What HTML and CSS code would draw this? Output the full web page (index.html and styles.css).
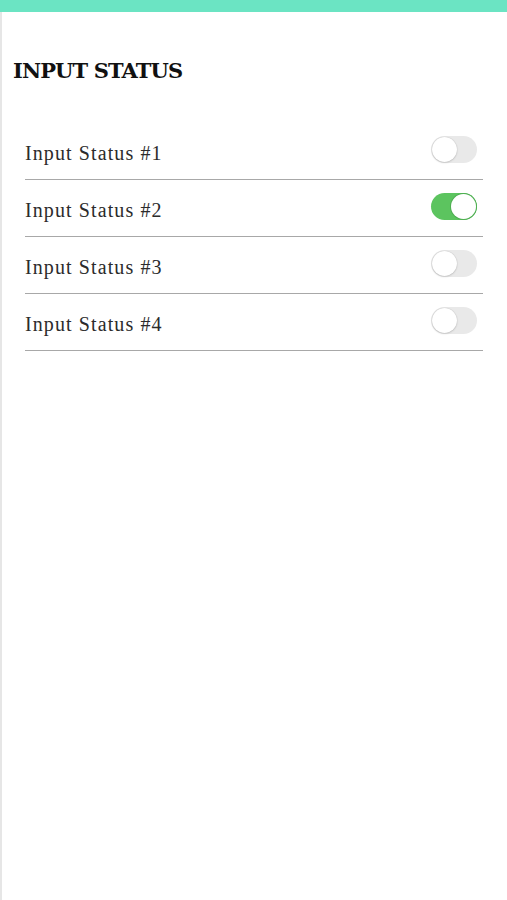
FILE: index.html
```html
<!DOCTYPE html>
<html lang="en">
<head>
    <meta charset="UTF-8">
    <meta name="viewport" content="width=device-width, initial-scale=1.0">
    <title>Input Status</title>
    <link rel="stylesheet" href="styles.css">
</head>
<body>

    <header class="top-bar"></header>

    <main class="panel">
        <h1>INPUT STATUS</h1>

        <ul class="status-list">
            <li class="status-row">
                <span>Input Status #1</span>
                <label class="switch"><input type="checkbox"><span class="slider"></span></label>
            </li>
            <li class="status-row">
                <span>Input Status #2</span>
                <label class="switch"><input type="checkbox" checked><span class="slider"></span></label>
            </li>
            <li class="status-row">
                <span>Input Status #3</span>
                <label class="switch"><input type="checkbox"><span class="slider"></span></label>
            </li>
            <li class="status-row">
                <span>Input Status #4</span>
                <label class="switch"><input type="checkbox"><span class="slider"></span></label>
            </li>
        </ul>
    </main>

</body>
</html>
```

FILE: styles.css
```css
html, body {
    height: 100%;
}

body {
    margin: 0;
    padding: 0;
    background: #fff;
    font-family: "Liberation Serif", serif;
    color: #2b2b2b;
    display: flex;
    flex-direction: column;
}

.top-bar {
    height: 12px;
    background: #6be4c3;
}

.panel {
    flex: 1;
    border-left: 2px solid #e6e6e6;
    padding: 41px 24px 0 11px;
}

h1 {
    margin: 0 0 34px;
    font-family: "DejaVu Serif", serif;
    font-weight: bold;
    font-size: 21px;
    letter-spacing: -0.9px;
    color: #111;
    line-height: 36px;
}

.status-list {
    list-style: none;
    margin: 0;
    padding: 0 0 0 12px;
}

.status-row {
    display: flex;
    align-items: center;
    justify-content: space-between;
    height: 56px;
    border-bottom: 1.5px solid #a8a8a8;
    font-size: 20px;
    letter-spacing: 1.1px;
    padding-right: 6px;
}

.status-row > span {
    padding-top: 5px;
}

.switch {
    position: relative;
    width: 46px;
    height: 27px;
    margin-top: -3px;
}

.switch input {
    display: none;
}

.slider {
    position: absolute;
    inset: 0;
    border-radius: 14px;
    background: #e9e9e9;
}

.slider::before {
    content: "";
    position: absolute;
    left: 1px;
    top: 1px;
    width: 25px;
    height: 25px;
    border-radius: 50%;
    background: #fff;
    box-shadow: 0 0 1px rgba(0, 0, 0, 0.25), 0 1px 2px rgba(0, 0, 0, 0.12);
}

.switch input:checked + .slider {
    background: #5cc45f;
}

.switch input:checked + .slider::before {
    left: 20px;
    box-shadow: 0 0 0 1px #4fae52;
}
```
